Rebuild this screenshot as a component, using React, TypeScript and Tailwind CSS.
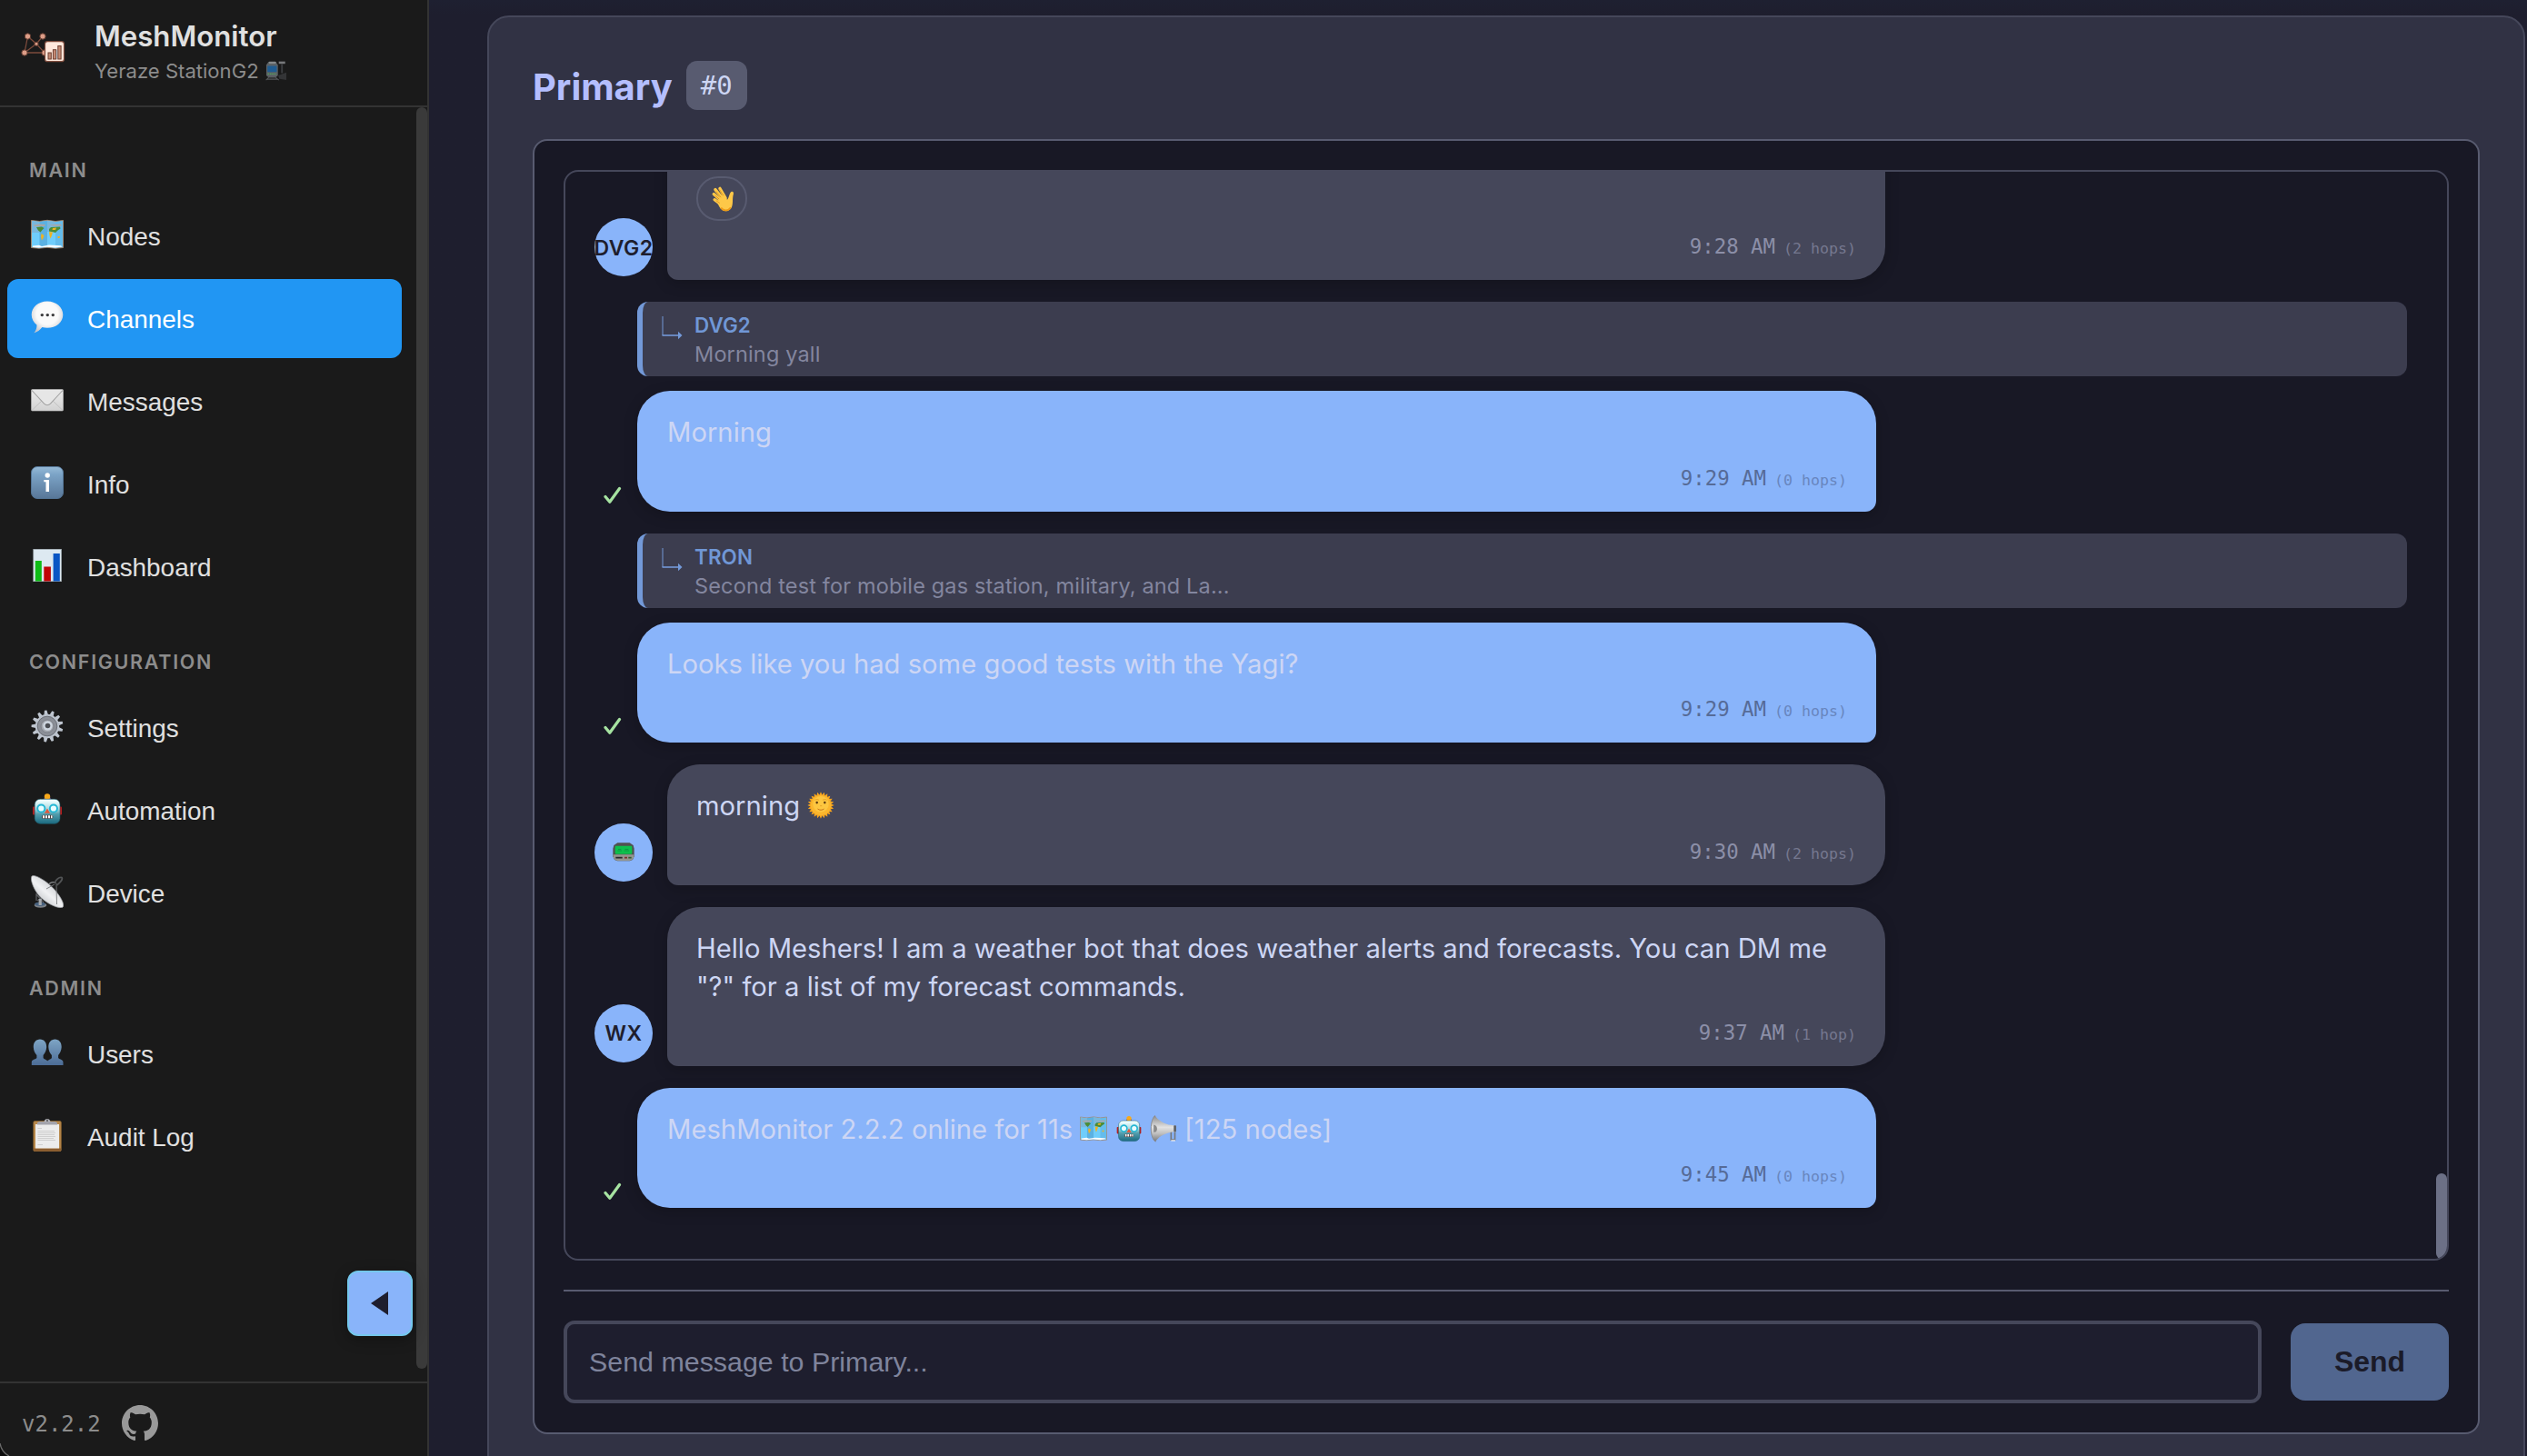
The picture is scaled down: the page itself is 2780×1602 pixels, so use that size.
import type { ReactNode } from "react";

type IconProps = { className?: string };

const MapIcon = ({ className }: IconProps) => (
  <svg viewBox="0 0 36 36" className={className}>
    <path d="M0.5 2.5 9.5 3.5 18 2.3 27 3.5 35.5 2.5V32.5L27 33.2 18 32.3 9 33.2 0.5 32.5Z" fill="#6fcdfb" stroke="#a98468" strokeWidth="0.9" />
    <path d="M1 3 9.5 4V16H1ZM18 2.8 27 4V15H18Z" fill="#79b7dc" />
    <path d="M9.5 4 18 2.8V32L9.5 32.8Z" fill="#4f9fd2" opacity="0.6" />
    <path d="M27 4 35 3V32L27 32.8Z" fill="#4f9fd2" opacity="0.35" />
    <path d="M3 7.5 10 6.5 16 7 15 9 4 9ZM20 7.5 33 6.5 34 8.5 28 9Z" fill="#a9a7a5" />
    <path d="M6 10 12 9.5 14.5 11 12.5 13 10.500 15.5 8 13.5ZM20 12 22 10 32 9.500 32.500 11.500 29.5 13.5 27 16 23 15 20 14.5Z" fill="#4c8c35" />
    <path d="M11.5 17 14.500 19 13.500 22 12 24.500 11 20.5ZM20 15 24 15.500 23 19 21.5 22.500 20.500 19ZM29.5 20 32 20 31.500 22 29.5 22ZM24 11 28 10.500 27 13 23.5 13Z" fill="#efb321" />
    <path d="M2 30.5 9 29.8 12 31 20 29.6 33 30.3 34.5 31.5 27 32.6 18 31.8 9 32.6 2 32Z" fill="#f7fbff" />
  </svg>
);

const SpeechIcon = ({ className }: IconProps) => (
  <svg viewBox="0 0 36 36" className={className}>
    <defs>
      <radialGradient id="speech" cx="0.5" cy="0.4" r="0.62">
        <stop offset="0.55" stopColor="#fafafa" />
        <stop offset="1" stopColor="#c7c7cb" />
      </radialGradient>
    </defs>
    <path d="M18 0.4C27.8 0.4 35.3 6.800 35.300 15.200S27.800 29.800 18 29.800C16 29.800 14.100 29.600 12.400 29.100 10.200 31.800 7 34.700 3.400 35.300 5.500 33 6.600 29.800 6.500 26.400 2.900 23.700 0.700 19.700 0.700 15.200 0.700 6.800 8.200 0.400 18 0.400Z" fill="url(#speech)" />
    <circle cx="12.300" cy="15.600" r="1.700" fill="#3a3a3c" />
    <circle cx="18.300" cy="15.600" r="1.700" fill="#3a3a3c" />
    <circle cx="24.300" cy="15.600" r="1.700" fill="#3a3a3c" />
  </svg>
);

const EnvelopeIcon = ({ className }: IconProps) => (
  <svg viewBox="0 0 36 36" className={className}>
    <defs>
      <linearGradient id="envelope" x1="0" y1="0" x2="0" y2="1">
        <stop offset="0" stopColor="#ececec" />
        <stop offset="1" stopColor="#d2d2d2" />
      </linearGradient>
    </defs>
    <rect x="0.500" y="6.500" width="35" height="23.500" rx="1" fill="url(#envelope)" stroke="#bcbcbc" strokeWidth="0.600" />
    <path d="M1 29.500 12.500 18.500M35 29.500 23.500 18.500" stroke="#bdbdbd" strokeWidth="0.900" fill="none" />
    <path d="M1 7.500 14.500 22.200C16.500 24.300 19.500 24.300 21.500 22.200L35 7.500" stroke="#a3a3a3" strokeWidth="1.100" fill="#e6e6e6" />
  </svg>
);

const InfoIcon = ({ className }: IconProps) => (
  <svg viewBox="0 0 36 36" className={className}>
    <defs>
      <linearGradient id="info" x1="0" y1="0" x2="0" y2="1">
        <stop offset="0" stopColor="#97bbd8" />
        <stop offset="0.250" stopColor="#7ba3c6" />
        <stop offset="1" stopColor="#587798" />
      </linearGradient>
    </defs>
    <rect x="0.500" y="0.500" width="35" height="35" rx="6.500" fill="url(#info)" stroke="#56789b" strokeWidth="0.900" />
    <circle cx="18.200" cy="10" r="2.700" fill="#fff" />
    <path d="M14.300 15H20V28H16.500V17.300H14.300Z" fill="#fff" />
  </svg>
);

const ChartIcon = ({ className }: IconProps) => (
  <svg viewBox="0 0 36 36" className={className}>
    <rect x="2.800" y="0.300" width="30.600" height="35.400" fill="#dde9f1" stroke="#a8b3ba" strokeWidth="0.700" />
    <rect x="4.800" y="13" width="7" height="22.500" fill="#0ebc16" />
    <rect x="14.300" y="19.500" width="7.600" height="16" fill="#c00506" />
    <rect x="24.600" y="5" width="7.200" height="30.500" fill="#0a56c4" />
  </svg>
);

const GearIcon = ({ className }: IconProps) => (
  <svg viewBox="0 0 36 36" className={className}>
    {Array.from({ length: 13 }, (_, i) => (
      <path key={i} d="M15.800 5.500 16.700 0.600H19.300L20.200 5.500Z" fill="#bfc6d0" transform={`rotate(${i * 27.69 - 6} 18 18)`} />
    ))}
    <circle cx="18" cy="18" r="13.200" fill="#bcc3cd" />
    <circle cx="18" cy="18" r="10.800" fill="#8b8f97" stroke="#6b6f77" strokeWidth="1" />
    <circle cx="18" cy="18" r="7" fill="#a3a7ae" stroke="#777b84" strokeWidth="0.800" />
    <circle cx="18.500" cy="17.500" r="5.200" fill="#ced6e0" />
    <circle cx="18.500" cy="17.500" r="2.800" fill="#4b4e54" />
  </svg>
);

const RobotIcon = ({ className }: IconProps) => (
  <svg viewBox="0 0 36 36" className={className}>
    <defs>
      <linearGradient id="robot" x1="0" y1="0" x2="0" y2="1">
        <stop offset="0.050" stopColor="#f1ffff" />
        <stop offset="0.400" stopColor="#a9d8df" />
        <stop offset="0.600" stopColor="#549fae" />
        <stop offset="1" stopColor="#1b6a80" />
      </linearGradient>
    </defs>
    <rect x="2" y="15.500" width="4" height="9" rx="1" fill="#b51f1f" />
    <rect x="30" y="15.500" width="4" height="9" rx="1" fill="#b51f1f" />
    <rect x="14.500" y="5" width="7.200" height="4" rx="1.500" fill="#6c5390" />
    <circle cx="18" cy="4.500" r="3.200" fill="#f8a91b" />
    <rect x="4.200" y="7.300" width="27.800" height="27" rx="6" fill="url(#robot)" stroke="#1d5f70" strokeWidth="0.600" />
    <circle cx="11.300" cy="17.500" r="4.100" fill="#e8fdff" stroke="#25b7d4" strokeWidth="2" />
    <circle cx="24.900" cy="17.500" r="4.100" fill="#e8fdff" stroke="#25b7d4" strokeWidth="2" />
    <path d="M18 17.500 21 22.800H15Z" fill="#e2573b" />
    <rect x="12" y="24.800" width="12.200" height="4" rx="1.500" fill="#4a3c3c" />
    <path d="M13 25.300H15V28.200H13ZM16 25.300H18V28.200H16ZM19 25.300H21V28.200H19ZM22 25.300H23.500V28.200H22Z" fill="#fff" />
  </svg>
);

const DishIcon = ({ className }: IconProps) => (
  <svg viewBox="0 0 36 36" className={className}>
    <defs>
      <linearGradient id="dish" x1="0.200" y1="0.900" x2="0.800" y2="0.200">
        <stop offset="0" stopColor="#b9bcc0" />
        <stop offset="0.500" stopColor="#f0f1f3" />
        <stop offset="1" stopColor="#c4c7ca" />
      </linearGradient>
    </defs>
    <path d="M6 20 6 28M6 21 14 30M7 28 13 24" stroke="#5b5d60" strokeWidth="1.300" />
    <ellipse cx="10.500" cy="33" rx="6.800" ry="2.700" fill="#7d8288" />
    <ellipse cx="10" cy="31.800" rx="6" ry="2.200" fill="#48627f" />
    <rect x="8.600" y="26" width="3.200" height="7" fill="#a4a8ad" />
    <path d="M1 1C4-2 20 8 27 17 34 25.500 37.500 33 35 35.200 31 37.500 17 31.500 9 22.500 2 14 -1 4 1 1Z" fill="url(#dish)" stroke="#9b9ea2" strokeWidth="0.700" />
    <path d="M26 10 17 15M28 9 28.500 32" stroke="#77797c" strokeWidth="0.900" fill="none" />
    <path d="M20 9.500C23 7 25 7 27.500 8.500" stroke="#8b8d90" strokeWidth="1.300" fill="none" />
    <path d="M26 8.500C28 4.500 31 2 34 2.500 35.500 4.500 31 9 28.500 11" stroke="#525456" strokeWidth="1.700" fill="none" />
  </svg>
);

const UsersIcon = ({ className }: IconProps) => (
  <svg viewBox="0 0 36 36" className={className}>
    <defs>
      <linearGradient id="users" x1="0" y1="3" x2="0" y2="32" gradientUnits="userSpaceOnUse">
        <stop offset="0" stopColor="#7fa6c6" />
        <stop offset="1" stopColor="#4c6c96" />
      </linearGradient>
    </defs>
    <path d="M10 3.500C14.500 3.500 17.300 7 17.200 12 17.100 16 15.300 18.800 13.600 21V24C15 26 18 26 18.500 28V32H0.800V29C0.800 25.500 4.500 26 6.400 24V21C4.500 18.800 2.900 16 2.800 12 2.700 7 5.500 3.500 10 3.500Z" fill="url(#users)" />
    <path d="M26.500 3.500C31 3.500 33.800 7 33.700 12 33.600 16 31.800 18.800 30.100 21V24C32 26 35.500 25.500 35.500 29V32H18V28C18.500 26 21.500 26 22.900 24V21C21 18.800 19.400 16 19.300 12 19.200 7 22 3.500 26.500 3.500Z" fill="url(#users)" />
  </svg>
);

const ClipboardIcon = ({ className }: IconProps) => (
  <svg viewBox="0 0 36 36" className={className}>
    <rect x="2.800" y="2.500" width="30.500" height="33.200" rx="1.500" fill="#b8894c" stroke="#8f672f" strokeWidth="0.700" />
    <rect x="3.200" y="32.500" width="29.700" height="3" fill="#8a5c2f" />
    <rect x="5" y="6" width="26" height="26.500" fill="#ececec" />
    <path d="M7.500 10.500H12M7.500 13.500H26M7.500 15.500H27M7.500 17.500H26M7.500 19.500H27M7.500 21.500H25M7.500 23.500H27M7.500 28.500H13" stroke="#cfcfcf" strokeWidth="1" />
    <path d="M7 6.500V4.200L9 3H27L29 4.200V6.500Z" fill="#a3a3ab" />
    <path d="M14.500 3.200C15 0.800 16.500 0.300 18 0.300S21 0.800 21.500 3.200Z" fill="#b8b8bf" />
    <circle cx="18" cy="2" r="0.900" fill="#444" />
  </svg>
);

const WaveIcon = ({ className }: IconProps) => (
  <svg viewBox="0 0 36 36" className={className}>
    <g fill="none" stroke="#fdc848" strokeWidth="4" strokeLinecap="round">
      <path d="M23 17 15.500 4" />
      <path d="M20 18.500 9.500 5.500" />
      <path d="M17.500 20.500 7.500 11.500" />
      <path d="M17 25 8.500 18.800" />
    </g>
    <path d="M17 13C21 14.500 23.500 18.500 25.500 18.500 27.500 17 28 10.500 30.500 8.500 32.500 7.500 34 9 33.500 11.500 31.500 18 33.500 24 31 29 28.500 34 22.500 35.500 18.500 32.500 15.500 30 14 27 12 22.500Z" fill="#fdc848" />
    <path d="M14.500 18 9 13.200M17 15.800 10.500 8M20.500 13.500 15 5.500M15.500 23.500 10.500 20" stroke="#d98a12" strokeWidth="0.900" fill="none" />
    <path d="M17 29.500C20 33.500 26 34.500 30 29" stroke="#ee9b17" strokeWidth="2.200" fill="none" />
  </svg>
);

const SunIcon = ({ className }: IconProps) => (
  <svg viewBox="0 0 36 36" className={className}>
    {Array.from({ length: 24 }, (_, i) => (
      <path key={i} d="M15.800 5 18 0.400 20.200 5Z" fill="#f9a51c" transform={`rotate(${i * 15} 18 18)`} />
    ))}
    <circle cx="18" cy="18" r="13.600" fill="#fbb62d" />
    <circle cx="18" cy="16.500" r="10.500" fill="#fdc640" />
    <ellipse cx="12.800" cy="14.500" rx="1.500" ry="1.600" fill="#5b3a10" />
    <ellipse cx="23.200" cy="14.500" rx="1.500" ry="1.600" fill="#5b3a10" />
    <path d="M10 11.200C11.500 10 14 10 15.500 11.200M20.500 11.200C22 10 24.500 10 26 11.200M17 18.800H19.500" stroke="#e09a20" strokeWidth="1" fill="none" />
    <path d="M13.800 22.800C16 24.800 20 24.800 22.200 22.800" stroke="#c9761a" strokeWidth="1.200" fill="none" />
  </svg>
);

const PagerIcon = ({ className }: IconProps) => (
  <svg viewBox="0 0 36 36" className={className}>
    <path d="M8 3.500H28L34 7.500 35.500 13V26L33 31.500 28 33.500H8L3 31.500 0.500 26V13L2 7.500Z" fill="#50514f" />
    <path d="M1 23H35V27L32.500 31 28 33H8L3.500 31 1 27Z" fill="#94958f" />
    <rect x="4" y="8.500" width="28" height="13.500" rx="1.500" fill="#0cc04c" />
    <path d="M8 16.500H15M19 16.500H27M9 14.200H14M20 14.200H26" stroke="#0a9440" strokeWidth="1.200" />
    <path d="M5 28H16" stroke="#26282a" strokeWidth="2.600" />
    <path d="M19.500 28H24" stroke="#7a2f2c" strokeWidth="2.600" />
    <path d="M26 28H31" stroke="#2e5c2c" strokeWidth="2.600" />
  </svg>
);

const SpeakerIcon = ({ className }: IconProps) => (
  <svg viewBox="0 0 36 36" className={className}>
    <defs>
      <linearGradient id="speaker" x1="0" y1="0" x2="0" y2="1">
        <stop offset="0" stopColor="#8a8a8a" />
        <stop offset="0.450" stopColor="#e2e2e2" />
        <stop offset="0.700" stopColor="#bdbdbd" />
        <stop offset="1" stopColor="#777777" />
      </linearGradient>
    </defs>
    <path d="M28 20V32.500H33V20" fill="none" stroke="#77797c" strokeWidth="2" />
    <path d="M28 33.500H33.500" stroke="#f4f4f4" strokeWidth="1.500" />
    <path d="M7 0.500C10 6 19 12 28 13L34 14V22L28 22.500C18 24.500 11 29 7.500 35 4 33 1.500 26 1.500 18S4 2 7 0.500Z" fill="url(#speaker)" />
    <path d="M7 0.500C4 2 1.500 10 1.500 18S4 33 7.500 35" fill="none" stroke="#858585" strokeWidth="1" />
    <path d="M5 13C8.500 13 9.500 15.500 9.500 18S8.500 23 5 22.500Z" fill="#8a8a8a" />
    <rect x="31.500" y="13.500" width="3.200" height="8.500" rx="1" fill="#5c5f63" />
  </svg>
);

const StationIcon = ({ className }: IconProps) => (
  <svg viewBox="0 0 36 36" className={className}>
    <path d="M23 1H34V5H23Z" fill="#77797b" />
    <path d="M28.500 5V21" stroke="#3b3d40" strokeWidth="3" />
    <path d="M22 25 36 20V33L24 31Z" fill="#333436" />
    <path d="M5 2H18L21.500 7V25L18 28H5L1.500 25V7Z" fill="#5c6266" />
    <rect x="6" y="1" width="12" height="3.500" rx="1" fill="#85898b" />
    <rect x="3.500" y="8.500" width="16" height="10.500" rx="1" fill="#1f5c92" />
    <path d="M4 22.500H19" stroke="#51a05a" strokeWidth="2.200" strokeDasharray="2.500 1.200" />
    <path d="M1 33 6 28H17L23 33M3 31.500H21" stroke="#55585b" strokeWidth="1.600" fill="none" />
  </svg>
);

const Logo = () => (
  <svg viewBox="0 0 52 38" className="h-[38px] w-[52px]">
    <g stroke="#7d4b3c" strokeWidth="1.300" fill="none">
      <path d="M8.500 6 5 24H27L18 14.300 25 6M8.500 6 18 14.300 5 24" />
    </g>
    <g fill="#dd9e88" stroke="#5e382d" strokeWidth="1">
      <circle cx="8.500" cy="6" r="3.200" />
      <circle cx="25" cy="6" r="3.200" />
      <circle cx="18" cy="14.300" r="2.100" />
      <circle cx="5" cy="24" r="3.200" />
      <circle cx="27" cy="24" r="3.200" />
    </g>
    <rect x="27.500" y="11.700" width="21" height="22" rx="2.800" fill="#ffe8dc" stroke="#7d4b3c" strokeWidth="1.200" />
    <g fill="#c58a74" stroke="#6f4132" strokeWidth="1">
      <rect x="31" y="24" width="3.300" height="7" />
      <rect x="36.400" y="20.700" width="3.300" height="10.300" />
      <rect x="41.800" y="16.500" width="3.300" height="14.500" />
    </g>
    <path d="M40.600 21V31" stroke="#a9b9c4" strokeWidth="0.900" fill="none" />
  </svg>
);

const GithubIcon = ({ className }: IconProps) => (
  <svg viewBox="0 0 16 16" className={className} fill="currentColor">
    <path d="M8 0C3.580 0 0 3.580 0 8c0 3.540 2.290 6.530 5.470 7.590.4.070.550-.170.550-.380 0-.190-.010-.820-.010-1.490-2.010.370-2.530-.490-2.690-.940-.090-.230-.480-.940-.820-1.130-.280-.150-.680-.520-.010-.530.630-.010 1.080.580 1.230.820.720 1.210 1.870.870 2.330.660.070-.520.280-.870.510-1.070-1.780-.2-3.640-.890-3.640-3.950 0-.870.310-1.590.820-2.150-.080-.2-.360-1.020.080-2.120 0 0 .670-.210 2.200.820.640-.180 1.320-.270 2-.270s1.360.090 2 .270c1.530-1.040 2.200-.820 2.200-.820.440 1.100.160 1.920.080 2.120.510.560.820 1.270.820 2.150 0 3.070-1.870 3.750-3.650 3.950.290.250.540.730.540 1.480 0 1.070-.010 1.930-.010 2.200 0 .210.150.460.550.380A8.010 8.010 0 0 0 16 8c0-4.420-3.580-8-8-8z" />
  </svg>
);

const CheckIcon = () => (
  <svg viewBox="0 0 20 20" className="mb-[8px] ml-[10px] h-5 w-5">
    <path d="M2 11.500 6.800 17.300 17.500 2.500" fill="none" stroke="#a6e3a1" strokeWidth="3.200" strokeLinecap="round" strokeLinejoin="round" />
  </svg>
);

type NavItem = { label: string; icon: (p: IconProps) => ReactNode; active?: boolean };

const sections: { title: string; items: NavItem[] }[] = [
  {
    title: "MAIN",
    items: [
      { label: "Nodes", icon: MapIcon },
      { label: "Channels", icon: SpeechIcon, active: true },
      { label: "Messages", icon: EnvelopeIcon },
      { label: "Info", icon: InfoIcon },
      { label: "Dashboard", icon: ChartIcon },
    ],
  },
  {
    title: "CONFIGURATION",
    items: [
      { label: "Settings", icon: GearIcon },
      { label: "Automation", icon: RobotIcon },
      { label: "Device", icon: DishIcon },
    ],
  },
  {
    title: "ADMIN",
    items: [
      { label: "Users", icon: UsersIcon },
      { label: "Audit Log", icon: ClipboardIcon },
    ],
  },
];

function Sidebar() {
  return (
    <aside className="relative flex h-full w-[472px] shrink-0 flex-col border-r-2 border-[#333333] bg-[#1a1a1a]">
      <header className="flex h-[118px] shrink-0 border-b-2 border-[#333333] pl-[22px]">
        <div className="pt-[34px]">
          <Logo />
        </div>
        <div className="ml-[30px] pt-[19px]">
          <div className="text-[31.2px] leading-[43px] font-semibold text-[#e0e0e0]">MeshMonitor</div>
          <div className="flex items-center text-[22.1px] leading-8 text-[#8c8c8c]">
            <span>Yeraze StationG2</span>
            <StationIcon className="ml-[7px] h-[23px] w-[23px]" />
          </div>
        </div>
      </header>

      <nav className="flex grow flex-col gap-12 pt-14 font-['Liberation_Sans',sans-serif]">
        {sections.map((section) => (
          <section key={section.title}>
            <h3 className="mb-4 pl-8 font-['Inter',sans-serif] text-[21.5px] leading-[26px] font-semibold tracking-[1.7px] text-[#8c8c8c]">
              {section.title}
            </h3>
            <div className="ml-2 flex w-[434px] flex-col gap-1">
              {section.items.map(({ label, icon: Icon, active }) => (
                <button
                  key={label}
                  className={
                    active
                      ? "flex h-[87px] items-center gap-[26px] rounded-xl bg-[#2196f3] pl-[26px] text-[27.9px] text-white"
                      : "flex h-[87px] items-center gap-[26px] rounded-xl pl-[26px] text-[27.9px] text-[#e0e0e0]"
                  }
                >
                  <Icon className="mb-[3px] h-9 w-9" />
                  <span className="pt-[2px]">{label}</span>
                </button>
              ))}
            </div>
          </section>
        ))}
      </nav>

      <footer className="flex h-[82px] shrink-0 items-center gap-[23px] border-t-2 border-[#333333] pt-[8px] pl-6 text-[#999999]">
        <span className="pt-px font-['DejaVu_Sans_Mono',monospace] text-[24px] leading-7 text-[#8c8c8c]">v2.2.2</span>
        <GithubIcon className="h-10 w-10" />
      </footer>

      <div className="absolute top-[118px] right-0 h-[1388px] w-3 rounded-full bg-[#3a3a3a]" />
      <button className="absolute top-[1398px] right-4 flex h-[72px] w-[72px] items-center justify-center rounded-xl border-2 border-[#74c7ec] bg-[#89b4fa] pr-[2px] shadow-[0_4px_16px_rgba(0,0,0,0.3)]">
        <svg viewBox="0 0 19 26" className="h-[26px] w-[19px]">
          <path d="M19 0V26L0 13Z" fill="#1e1e2e" />
        </svg>
      </button>
      <svg viewBox="0 0 12 14" className="absolute bottom-0 left-0 h-[14px] w-3">
        <path d="M0 0C1 6 4 11 10 14H0Z" fill="#0c0c0c" />
        <path d="M0 0C1 6 4 11 10 14" fill="none" stroke="#6a6a6a" strokeWidth="1.300" />
      </svg>
    </aside>
  );
}

function Quote({ name, text }: { name: string; text: string }) {
  return (
    <div className="mb-4 ml-[47px] flex h-[82px] rounded-xl border-l-[6px] border-[#7399d8] bg-[#3c3d4f] pt-[9px] pl-[21px]">
      <svg viewBox="0 0 24 28" className="mt-[5px] h-7 w-6">
        <path d="M1 2V23" fill="none" stroke="#7399d8" strokeWidth="1" />
        <path d="M0.500 23H20" fill="none" stroke="#7399d8" strokeWidth="1.600" />
        <path d="M18 18.800 22.500 23 18 27.200Z" fill="#7399d8" />
      </svg>
      <div className="ml-3 pt-px">
        <div className="text-[22.4px] leading-8 font-semibold tracking-[0.100px] text-[#7097d6]">{name}</div>
        <div className="text-[23.500px] leading-[31px] tracking-[0.150px] text-[#83869f]">{text}</div>
      </div>
    </div>
  );
}

type BubbleProps = { mine?: boolean; time: string; hops: string; children: ReactNode };

function Bubble({ mine, time, hops, children }: BubbleProps) {
  return (
    <div
      className={
        mine
          ? "w-[1363px] rounded-[36px] rounded-br-xl bg-[#89b4fa] py-6 pr-8 pl-[33px] shadow-[0_4px_16px_rgba(0,0,0,0.2)]"
          : "w-[1340px] rounded-[36px] rounded-bl-xl bg-[#45475a] px-8 py-6 shadow-[0_4px_16px_rgba(0,0,0,0.2)]"
      }
    >
      <div className="mb-[15px] pt-px text-[29.22px] leading-[42.5px] text-[#cdd6f4]">{children}</div>
      <div className="flex h-[26px] items-baseline justify-end gap-[9px] font-['DejaVu_Sans_Mono',monospace]">
        <span className={mine ? "text-[22.4px] leading-[26px] text-[#566b97]" : "text-[22.4px] leading-[26px] text-[#8c8fa8]"}>{time}</span>
        <span className={mine ? "text-[16.6px] leading-5 text-[#6886be]" : "text-[16.6px] leading-5 text-[#75788f]"}>{hops}</span>
      </div>
    </div>
  );
}

function Incoming({ avatar, children }: { avatar: ReactNode; children: ReactNode }) {
  return (
    <div className="flex shrink-0 items-end gap-4">
      <div className="mb-1 flex h-16 w-16 shrink-0 items-center justify-center rounded-full bg-[#89b4fa] pt-[2px] text-[23px] font-semibold tracking-[0.500px] whitespace-nowrap text-[#1e1e2e]">
        {avatar}
      </div>
      {children}
    </div>
  );
}

function Outgoing({ quote, children }: { quote?: ReactNode; children: ReactNode }) {
  return (
    <div className="shrink-0">
      {quote}
      <div className="flex items-end">
        <div className="w-[47px] shrink-0">
          <CheckIcon />
        </div>
        {children}
      </div>
    </div>
  );
}

const inlineEmoji = "inline-block h-[30px] w-[30px] align-[-4px]";

function MessageList() {
  return (
    <div className="relative flex h-[1200px] flex-col justify-end gap-6 overflow-hidden rounded-2xl border-2 border-[#45475a] pr-11 pb-14 pl-8">
      <Incoming avatar="DVG2">
        <Bubble time="9:28 AM" hops="(2 hops)">
          <span className="mt-12 flex h-[49px] w-14 items-center justify-center rounded-[24px] border-2 border-[#585b70]">
            <WaveIcon className="h-[30px] w-[30px]" />
          </span>
        </Bubble>
      </Incoming>
      <Outgoing quote={<Quote name="DVG2" text="Morning yall" />}>
        <Bubble mine time="9:29 AM" hops="(0 hops)">
          Morning
        </Bubble>
      </Outgoing>
      <Outgoing quote={<Quote name="TRON" text="Second test for mobile gas station, military, and La..." />}>
        <Bubble mine time="9:29 AM" hops="(0 hops)">
          Looks like you had some good tests with the Yagi?
        </Bubble>
      </Outgoing>
      <Incoming avatar={<PagerIcon className="mb-1 h-6 w-6" />}>
        <Bubble time="9:30 AM" hops="(2 hops)">
          morning <SunIcon className={inlineEmoji} />
        </Bubble>
      </Incoming>
      <Incoming avatar="WX">
        <Bubble time="9:37 AM" hops="(1 hop)">
          Hello Meshers! I am a weather bot that does weather alerts and forecasts. You can DM me
          <br />
          "?" for a list of my forecast commands.
        </Bubble>
      </Incoming>
      <Outgoing>
        <Bubble mine time="9:45 AM" hops="(0 hops)">
          MeshMonitor 2.2.2 online for 11s <MapIcon className={inlineEmoji} /> <RobotIcon className={inlineEmoji} />{" "}
          <SpeakerIcon className={inlineEmoji} /> [125 nodes]
        </Bubble>
      </Outgoing>
      <div className="absolute right-0 bottom-0 h-[94px] w-3 rounded-full bg-[#6c7086]" />
    </div>
  );
}

export default function App() {
  return (
    <div className="flex h-[1602px] w-[2780px] overflow-hidden bg-[#1e1e2e] font-['Inter',sans-serif]">
      <Sidebar />
      <main className="h-full grow bg-linear-to-b from-[#1e2031] to-[#1e1e2e] to-[16px] pt-[17px] pr-[2px] pl-16">
        <div className="h-[1640px] rounded-3xl border-2 border-[#45475a] bg-[#313244] p-12">
          <div className="mb-8 flex h-[54px] items-center gap-[15px]">
            <h2 className="pt-[3px] text-[39.9px] leading-[48px] font-bold text-[#b4befe]">Primary</h2>
            <span className="flex h-[54px] w-[67px] items-center justify-center rounded-xl bg-[#585b70] pt-px font-['DejaVu_Sans_Mono',monospace] text-[29px] text-[#cdd6f4]">
              #0
            </span>
          </div>

          <div className="h-[1425px] rounded-2xl border-2 border-[#585b70] bg-[#181825] p-8">
            <MessageList />
            <div className="mt-8 flex items-center gap-8 border-t-2 border-[#585b70] pt-8 font-['Liberation_Sans',sans-serif]">
              <div className="flex h-[91px] grow items-center rounded-xl border-4 border-[#45475a] bg-[#1e1e2e] pl-6 text-[30.4px] text-[#7f849c]">
                Send message to Primary...
              </div>
              <button className="h-[85px] w-[174px] rounded-2xl bg-[#51668f] pb-[2px] text-[32px] font-bold text-[#1b1b29]">Send</button>
            </div>
          </div>
        </div>
      </main>
    </div>
  );
}
